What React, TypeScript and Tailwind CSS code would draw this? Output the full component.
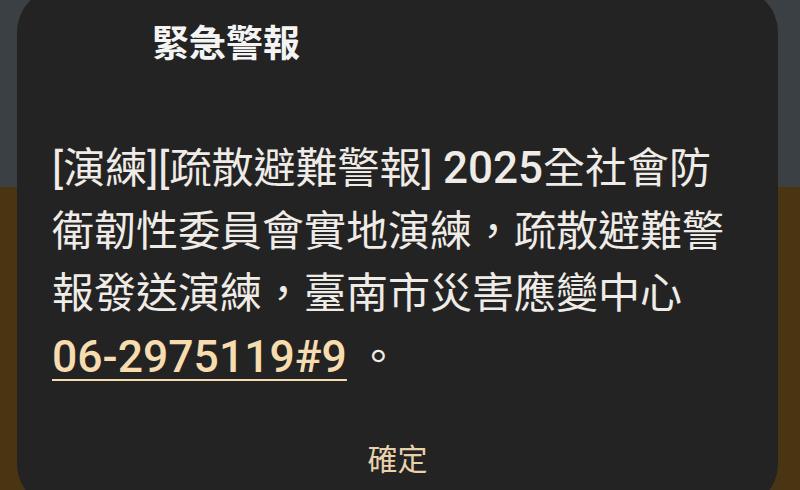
const font = { fontFamily: "Roboto, 'Noto Sans CJK TC', sans-serif" };

export default function App() {
  return (
    <div
      className="w-[800px] h-[490px] overflow-hidden bg-[linear-gradient(180deg,#3b4045_0px,#3b4045_187px,#4a3512_187px,#4a3512_100%)]"
      style={font}
    >
      <div className="ml-[17px] mt-[-12px] w-[761px] h-[520px] rounded-[44px] bg-[#232323] flex flex-col">
        <div className="pl-[135px] pt-[35px] text-[37px] leading-[44px] font-bold text-[#f4f4f4]">
          緊急警報
        </div>

        <p className="mt-[70px] pl-[35px] text-[42px] leading-[62.5px] text-[#efebe6] whitespace-nowrap">
          [演練][疏散避難警報] <span className="font-medium text-[44px]">2025</span>全社會防
          <br />
          衛韌性委員會實地演練，疏散避難警
          <br />
          報發送演練，臺南市災害應變中心
          <br />
          <span className="font-medium text-[44.5px] text-[#f6dcaf] underline decoration-[2px] underline-offset-[7px]">
            06-2975119#9
          </span>{" "}
          。
        </p>

        <div className="mt-[51px] text-center text-[30px] leading-[40px] text-[#e8d2ac]">
          確定
        </div>
      </div>
    </div>
  );
}
